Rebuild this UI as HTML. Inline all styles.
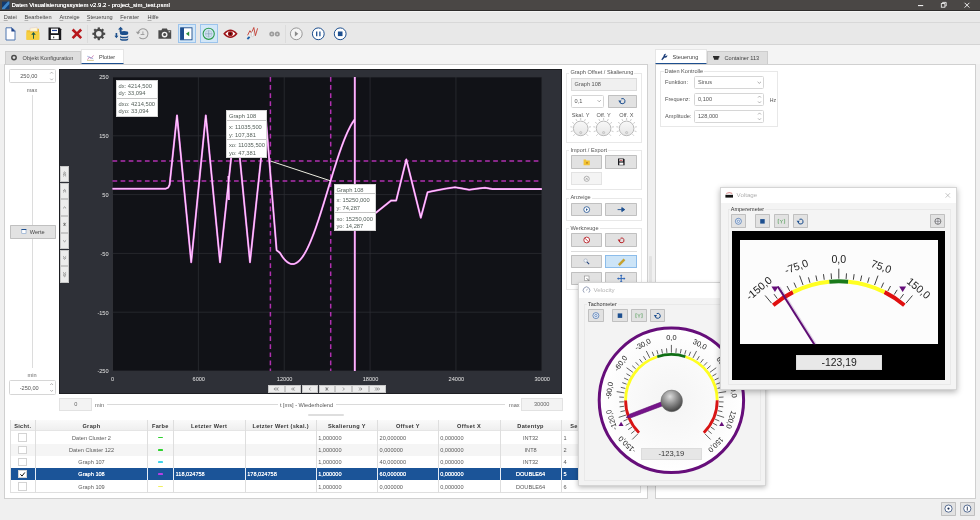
<!DOCTYPE html><html><head><meta charset="utf-8"><title>Daten Visualisierungssystem</title><style>
html,body{margin:0;padding:0}
body{width:980px;height:520px;overflow:hidden;background:#f0f0f0;font-family:"Liberation Sans",sans-serif;font-size:5.6px;color:#3a3a3a;position:relative}
.a{position:absolute;box-sizing:border-box}
.t{height:8px;line-height:8px;white-space:nowrap}
.c{text-align:center}.r{text-align:right}
.btn{background:#e2e2e2;border:1px solid #c0c0c0;border-radius:.8px}
.fld{background:#fff;border:1px solid #d6d6d6;border-radius:1.5px}
.grp{border:1px solid #e8e8e8}
.pnl{background:#fff;border:1px solid #d0d0d0}
.tip{background:#fff;border:1px solid #d4d4d4;color:#55605a;font-size:5.75px}
.b{font-weight:bold;letter-spacing:.33px}
#root{position:absolute;left:0;top:0;width:980px;height:520px;overflow:hidden;will-change:transform}
svg{position:absolute;left:0;top:0;overflow:visible}
</style></head><body><div id="root">
<div class="a " style="left:0.00px;top:0.00px;width:980.00px;height:11.00px;background:#4a4745;border-bottom:1px solid #2e2c2b"></div>
<svg width="980" height="12" viewBox="0 0 980 12"><rect x="2" y="1.6" width="7.4" height="7.6" fill="#123a6e"/><path d="M2 8 L8 1.6 H9.4 V4 L4.6 9.2 H2Z" fill="#3f86c8"/><path d="M918 5.6h5.2" stroke="#fff" stroke-width="1"/><rect x="941.3" y="3.6" width="3.6" height="3.6" fill="none" stroke="#fff" stroke-width=".8"/><path d="M942.6 3.4v-1h3.6v3.6h-1" fill="none" stroke="#fff" stroke-width=".8"/><path d="M964.6 2.8l4.8 4.8M969.4 2.8l-4.8 4.8" stroke="#fff" stroke-width=".9"/></svg>
<div class="a t " style="left:11.50px;top:1.30px;color:#fff;font-size:6px;text-shadow:0 0 .3px #fff">Daten Visualisierungssystem v2.9.2 - project_sim_test.psml</div>
<div class="a " style="left:0.00px;top:11.00px;width:980.00px;height:12.00px;background:#e9e9e9;border-top:1px solid #f4f4f4;border-bottom:1px solid #d8d8d8"></div>
<div class="a t " style="left:3.70px;top:13.30px;color:#444"><u style="text-decoration-thickness:.35px;text-underline-offset:.6px;text-decoration-color:#b0b0b0">D</u>atei</div>
<div class="a t " style="left:24.50px;top:13.30px;color:#444"><u style="text-decoration-thickness:.35px;text-underline-offset:.6px;text-decoration-color:#b0b0b0">B</u>earbeiten</div>
<div class="a t " style="left:59.50px;top:13.30px;color:#444"><u style="text-decoration-thickness:.35px;text-underline-offset:.6px;text-decoration-color:#b0b0b0">A</u>nzeige</div>
<div class="a t " style="left:86.80px;top:13.30px;color:#444"><u style="text-decoration-thickness:.35px;text-underline-offset:.6px;text-decoration-color:#b0b0b0">S</u>teuerung</div>
<div class="a t " style="left:120.20px;top:13.30px;color:#444"><u style="text-decoration-thickness:.35px;text-underline-offset:.6px;text-decoration-color:#b0b0b0">F</u>enster</div>
<div class="a t " style="left:147.50px;top:13.30px;color:#444"><u style="text-decoration-thickness:.35px;text-underline-offset:.6px;text-decoration-color:#b0b0b0">H</u>ilfe</div>
<div class="a " style="left:0.00px;top:23.00px;width:980.00px;height:22.00px;background:#e8e8e8;border-bottom:1px solid #d4d4d4"></div>
<div class="a " style="left:0.00px;top:45.00px;width:980.00px;height:19.00px;background:#f4f4f4"></div>
<div class="a " style="left:87.00px;top:25.00px;width:1.00px;height:18.00px;background:#dcdcdc"></div>
<div class="a " style="left:285.00px;top:25.00px;width:1.00px;height:18.00px;background:#dcdcdc"></div>
<div class="a " style="left:177.60px;top:24.20px;width:18.00px;height:18.40px;background:#d3e7f8;border:1px solid #9cc4ec"></div>
<div class="a " style="left:199.70px;top:24.20px;width:17.90px;height:18.40px;background:#d3e7f8;border:1px solid #9cc4ec"></div>
<svg width="980" height="50" viewBox="0 0 980 50"><path d="M6 27.799999999999997h6l3 3v9.2h-9z" fill="#fdfdff" stroke="#4f76b0" stroke-width="1"/><path d="M11.4 27.4v4h4z" fill="#1f438a"/><path d="M26.5 30.299999999999997h5l1 -1.6h6.5v11h-12.5z" fill="#f1c232"/><path d="M30 28.199999999999996l7 -1 .6 4h-7.6z" fill="#fff6d8" stroke="#caa" stroke-width=".3"/><path d="M26.5 32.3h13v7.4h-13z" fill="#f6cf3f"/><path d="M33 38.8v-4h-1.8l2.3-2.8 2.3 2.8h-1.8v4z" fill="#1f5c4a"/><path d="M48.5 27.599999999999998h11l1.7 1.7v10.7h-12.7z" fill="#1a1a1e"/><rect x="51" y="28.599999999999998" width="7" height="4.6" fill="#fff"/><rect x="52" y="29.9" width="5" height="1.2" fill="#27489a"/><rect x="50.8" y="35.0" width="8" height="4.4" fill="#fff"/><rect x="53.2" y="36.599999999999994" width="1" height="1.6" fill="#222"/><path d="M72.6 29.499999999999996l8.6 8.6M81.2 29.499999999999996l-8.6 8.6" stroke="#b8181c" stroke-width="2.6"/><path d="M103.00 33.80L105.20 33.80" stroke="#484848" stroke-width="2.2"/><path d="M101.77 36.77L103.33 38.33" stroke="#484848" stroke-width="2.2"/><path d="M98.80 38.00L98.80 40.20" stroke="#484848" stroke-width="2.2"/><path d="M95.83 36.77L94.27 38.33" stroke="#484848" stroke-width="2.2"/><path d="M94.60 33.80L92.40 33.80" stroke="#484848" stroke-width="2.2"/><path d="M95.83 30.83L94.27 29.27" stroke="#484848" stroke-width="2.2"/><path d="M98.80 29.60L98.80 27.40" stroke="#484848" stroke-width="2.2"/><path d="M101.77 30.83L103.33 29.27" stroke="#484848" stroke-width="2.2"/><circle cx="98.8" cy="33.8" r="3.9" fill="none" stroke="#484848" stroke-width="2.2"/><path d="M120 32.4a4.1 1.5 0 0 1 8.2 0v1.2a4.1 1.5 0 0 1-8.2 0z M120 35.199999999999996a4.1 1.5 0 0 0 8.2 0v1.5a4.1 1.5 0 0 1-8.2 0z M120 37.8a4.1 1.5 0 0 0 8.2 0v1.5a4.1 1.5 0 0 1-8.2 0z" fill="#1c4f8c"/><path d="M119.6 32.199999999999996v-2.6h-1.6l2.6-2.8 2.6 2.8h-1.6v2.6z" fill="#1c4f8c"/><path d="M115.6 33.0h1.6v2.8h1.2l-2 2.4-2-2.4h1.2z" fill="#1c4f8c"/><path d="M138 33.3a5 5 0 1 1 1.4 4" fill="none" stroke="#9a9a9a" stroke-width="1.1"/><path d="M135.8 31.799999999999997h4.4l-2.2 2.8z" fill="#9a9a9a"/><path d="M140.6 34.5h3.8M142.9 31.4v3" stroke="#9a9a9a" stroke-width=".9" fill="none"/><path d="M158.4 30.199999999999996h3l.9-1.6h4.6l.9 1.6h3.4v8.6h-12.8z" fill="#4a4a4a"/><circle cx="164.6" cy="34.599999999999994" r="2.9" fill="#f2f2f2"/><circle cx="164.6" cy="34.599999999999994" r="1.5" fill="#4a4a4a"/><rect x="168.6" y="31.299999999999997" width="1.6" height="1" fill="#eee"/><rect x="180.6" y="27.799999999999997" width="11.4" height="12" fill="#fff" stroke="#1d4f8f" stroke-width=".9"/><rect x="180.6" y="27.799999999999997" width="3.4" height="12" fill="#1d4f8f"/><path d="M189.2 31.4v4.8l-3.3-2.4z" fill="#2d8f3c"/><circle cx="208.7" cy="33.8" r="5.6" fill="none" stroke="#2d9a4a" stroke-width="1.1"/><circle cx="208.7" cy="33.8" r="3.4" fill="#cfe0ee" stroke="#9ab" stroke-width=".4"/><path d="M208.7 30.4v6.8M205.3 33.8h6.8" stroke="#7d99b4" stroke-width=".6"/><path d="M224.2 33.8q6.2 -7 12.4 0q-6.2 7 -12.4 0z" fill="#fff" stroke="#9c1418" stroke-width="1.5"/><circle cx="230.4" cy="33.8" r="2.5" fill="#9c1418"/><circle cx="230.4" cy="33.8" r="1" fill="#2a0a0a"/><path d="M247.6 35.3l2.3-4.6 1.6 2.3 2.3-5.5 1.6 8.2 2.2-7.4" fill="none" stroke="#c23a30" stroke-width=".9"/><path d="M251.6 31.999999999999996q1.6-1.4 2.2.6v3.4q-1.4 1.4-2.6 0z" fill="#f6f6f6" stroke="#aaa" stroke-width=".4"/><path d="M247.4 39.0l2.2-2.2" stroke="#1b5fa8" stroke-width="1.8"/><circle cx="271.8" cy="34.099999999999994" r="2.5" fill="#9c9c9c"/><circle cx="277.3" cy="34.099999999999994" r="2.5" fill="#9c9c9c"/><circle cx="271.8" cy="34.099999999999994" r=".9" fill="#d8d8d8"/><circle cx="277.3" cy="34.099999999999994" r=".9" fill="#d8d8d8"/><circle cx="296.3" cy="33.8" r="5.9" fill="#f4f4f4" stroke="#8f8f8f" stroke-width=".9"/><path d="M294.9 31.199999999999996v5.2l3.4-2.6z" fill="#8a8a8a"/><circle cx="318.3" cy="33.8" r="5.9" fill="#fff" stroke="#1d4f8f" stroke-width="1"/><path d="M316.7 31.4v4.8M319.9 31.4v4.8" stroke="#1d4f8f" stroke-width="1.3"/><circle cx="340.2" cy="33.8" r="5.9" fill="#fff" stroke="#1d4f8f" stroke-width="1"/><rect x="337.9" y="31.499999999999996" width="4.6" height="4.6" fill="#1d4f8f"/></svg>
<div class="a " style="left:4.50px;top:50.60px;width:76.70px;height:13.40px;background:#dedede;border:1px solid #cdcdcd;border-bottom:none"></div>
<div class="a t " style="left:22.60px;top:53.80px;color:#444">Objekt Konfiguration</div>
<div class="a " style="left:81.20px;top:49.30px;width:43.20px;height:14.70px;background:#fff;border:1px solid #e5e5e5;border-bottom:1.1px solid #1d4f8f"></div>
<div class="a t " style="left:99.00px;top:53.00px;color:#444">Plotter</div>
<div class="a pnl" style="left:4.00px;top:63.50px;width:643.60px;height:435.00px;"></div>
<div class="a pnl" style="left:655.00px;top:63.50px;width:320.60px;height:435.00px;"></div>
<div class="a " style="left:707.00px;top:50.60px;width:60.50px;height:13.40px;background:#dedede;border:1px solid #cdcdcd;border-bottom:none"></div>
<div class="a " style="left:655.00px;top:49.30px;width:52.00px;height:15.00px;background:#fff;border:1px solid #e5e5e5;border-bottom:1.1px solid #1d4f8f"></div>
<div class="a t " style="left:672.50px;top:53.00px;color:#444">Steuerung</div>
<div class="a t " style="left:724.50px;top:53.80px;color:#444">Container 113</div>
<svg width="980" height="70" viewBox="0 0 980 70"><circle cx="14" cy="57.6" r="2.2" fill="none" stroke="#4a4a4a" stroke-width="1.5"/><path d="M87.5 59.6l2-2.6 1.6 1.4 2.4-3" fill="none" stroke="#c05a9a" stroke-width=".7"/><path d="M87.2 56.2l6 2.6" stroke="#6a8fd0" stroke-width=".6"/><path d="M87 60.4h6.8" stroke="#b9a34a" stroke-width=".6"/><path transform="translate(2.6 .3) scale(1.0)" d="M661 55.6a1.9 1.9 0 0 1 2.6 -1.9l-1.2 1.3 .9 .9 1.3 -1.2a1.9 1.9 0 0 1 -2.4 2.5l-2.6 2.8 -.9 -.9z" fill="#1d3f7a"/><path d="M713 56h6.4v1.4h-6.4zM713.6 57.6h5.2l-.5 2.2h-4.2z" fill="#2a2a2a"/></svg>
<div class="a grp" style="left:660.00px;top:71.00px;width:118.00px;height:56.00px;"></div>
<div class="a t " style="left:663.60px;top:66.80px;background:#fff;padding:0 1px;color:#555">Daten Kontrolle</div>
<div class="a t " style="left:665.00px;top:78.40px;color:#555">Funktion:</div>
<div class="a fld" style="left:694.20px;top:76.00px;width:69.60px;height:12.80px;"></div>
<div class="a t " style="left:698.00px;top:78.40px;color:#555">Sinus</div>
<div class="a t " style="left:665.00px;top:95.30px;color:#555">Frequenz:</div>
<div class="a fld" style="left:694.20px;top:92.90px;width:69.60px;height:12.80px;"></div>
<div class="a t " style="left:698.00px;top:95.30px;color:#555">0,100</div>
<div class="a t " style="left:665.00px;top:112.20px;color:#555">Amplitude:</div>
<div class="a fld" style="left:694.20px;top:109.80px;width:69.60px;height:12.80px;"></div>
<div class="a t " style="left:698.00px;top:112.20px;color:#555">128,000</div>
<div class="a t " style="left:769.80px;top:95.60px;color:#555;font-size:5.2px">Hz</div>
<svg width="980" height="130" viewBox="0 0 980 130"><path d="M757.6 81.8l1.7 1.6 1.7-1.6" fill="none" stroke="#777" stroke-width=".6"/><path d="M758 97.6l1.5-1.6 1.5 1.6M758 101.4l1.5 1.6 1.5-1.6M758 114.5l1.5-1.6 1.5 1.6M758 118.3l1.5 1.6 1.5-1.6" fill="none" stroke="#888" stroke-width=".6"/></svg>
<div class="a btn" style="left:940.80px;top:501.60px;width:15.60px;height:14.00px;"></div>
<div class="a btn" style="left:959.60px;top:501.60px;width:15.70px;height:14.00px;"></div>
<svg width="980" height="520" viewBox="0 0 980 520"><circle cx="948.5" cy="508.6" r="3.6" fill="#fff" stroke="#2f4a78" stroke-width=".8"/><circle cx="948.5" cy="508.6" r="1.1" fill="#1c2f55"/><circle cx="967.3" cy="508.6" r="3.6" fill="#fff" stroke="#2f4a78" stroke-width=".8"/><path d="M967.3 506.6v4" stroke="#1c2f55" stroke-width=".9"/></svg>
<div class="a fld" style="left:9.00px;top:69.00px;width:47.00px;height:14.00px;"></div>
<div class="a t c " style="left:-21.20px;width:100px;top:72.20px;color:#555">250,00</div>
<div class="a fld" style="left:9.00px;top:380.00px;width:47.00px;height:15.00px;"></div>
<div class="a t c " style="left:-20.80px;width:100px;top:383.60px;color:#555">-250,00</div>
<div class="a t c " style="left:-18.00px;width:100px;top:85.60px;color:#666">max</div>
<div class="a t c " style="left:-18.00px;width:100px;top:370.60px;color:#666">min</div>
<div class="a " style="left:32.00px;top:95.00px;width:1.00px;height:130.00px;background:#dcdcdc"></div>
<div class="a " style="left:32.00px;top:239.00px;width:1.00px;height:129.00px;background:#dcdcdc"></div>
<div class="a btn" style="left:10.00px;top:225.00px;width:45.60px;height:13.70px;"></div>
<div class="a t " style="left:29.80px;top:228.00px;color:#444">Werte</div>
<svg width="980" height="520" viewBox="0 0 980 520"><path d="M50.2 73.6l1.4-1.5 1.4 1.5M50.2 78.6l1.4 1.5 1.4-1.5M50.2 385l1.4-1.5 1.4 1.5M50.2 390l1.4 1.5 1.4-1.5" fill="none" stroke="#888" stroke-width=".6"/><rect x="21.8" y="229.4" width="4.2" height="4.2" fill="#fff" stroke="#7a9cc8" stroke-width=".6"/><path d="M21.5 229.5h4.8" stroke="#1d4f8f" stroke-width="1"/></svg>
<div class="a " style="left:59.20px;top:397.50px;width:33.00px;height:13.70px;background:#f3f3f3;border:1px solid #e2e2e2"></div>
<div class="a t c " style="left:25.70px;width:100px;top:400.40px;color:#666">0</div>
<div class="a t " style="left:95.00px;top:400.60px;color:#666">min</div>
<div class="a " style="left:107.00px;top:404.30px;width:171.00px;height:0.60px;background:#dadada"></div>
<div class="a t c " style="left:256.50px;width:100px;top:400.50px;color:#555">t [ms] - Wiederholend</div>
<div class="a " style="left:336.00px;top:404.30px;width:169.00px;height:0.60px;background:#dadada"></div>
<div class="a t " style="left:509.00px;top:400.60px;color:#666">max</div>
<div class="a " style="left:521.00px;top:397.50px;width:41.50px;height:13.70px;background:#f3f3f3;border:1px solid #e2e2e2"></div>
<div class="a t c " style="left:491.70px;width:100px;top:400.40px;color:#666">30000</div>
<div class="a " style="left:308.00px;top:414.00px;width:36.00px;height:2.00px;background:#dedede;border-radius:1px"></div>
<div class="a " style="left:59.40px;top:69.10px;width:502.90px;height:324.90px;background:#2e3037;border:1px solid #1d1e22"></div>
<div class="a " style="left:112.50px;top:77.00px;width:429.30px;height:294.00px;background:#111217"></div>
<svg width="980" height="520" viewBox="0 0 980 520"><path d="M112.50 77.0V371.0" stroke="#2f3137" stroke-width=".7"/><path d="M198.36 77.0V371.0" stroke="#2f3137" stroke-width=".7"/><path d="M284.22 77.0V371.0" stroke="#2f3137" stroke-width=".7"/><path d="M370.08 77.0V371.0" stroke="#2f3137" stroke-width=".7"/><path d="M455.94 77.0V371.0" stroke="#2f3137" stroke-width=".7"/><path d="M541.80 77.0V371.0" stroke="#2f3137" stroke-width=".7"/><path d="M112.5 371.00H541.8" stroke="#2f3137" stroke-width=".7"/><path d="M112.5 312.20H541.8" stroke="#2f3137" stroke-width=".7"/><path d="M112.5 253.40H541.8" stroke="#2f3137" stroke-width=".7"/><path d="M112.5 194.60H541.8" stroke="#2f3137" stroke-width=".7"/><path d="M112.5 135.80H541.8" stroke="#2f3137" stroke-width=".7"/><path d="M112.5 77.00H541.8" stroke="#2f3137" stroke-width=".7"/><path d="M112.5 161H541.8M112.5 180.9H541.8" stroke="#b030b0" stroke-width="1.5" stroke-dasharray="4.7 3.4" fill="none"/><path d="M270.4 77.0V371.0M330.7 77.0V371.0" stroke="#b030b0" stroke-width="1.5" stroke-dasharray="4.7 3.4" fill="none"/><path d="M112.50 188.70 L165.80 188.70 L168.20 187.60 L169.60 184.80 L177.00 115.40 L191.20 262.20 L205.80 115.40 L220.00 262.20 L235.70 115.40 L250.00 262.20 L265.60 115.40 L276.60 250.20 L279.20 252.20 L280.50 253.73 L281.50 255.34 L282.50 256.82 L283.50 258.16 L284.50 259.38 L285.50 260.45 L286.50 261.39 L287.50 262.18 L288.50 262.84 L289.50 263.34 L290.50 263.71 L291.50 263.93 L292.50 264.00 L293.50 263.93 L294.50 263.71 L295.50 263.34 L296.50 262.84 L297.50 262.18 L298.50 261.39 L299.50 260.45 L300.50 259.38 L301.50 258.16 L302.50 256.82 L303.50 255.34 L304.50 253.73 L305.50 252.00 L306.50 250.14 L307.50 248.17 L308.50 246.07 L309.50 243.87 L310.50 241.56 L311.50 239.15 L312.50 236.64 L313.50 234.04 L314.50 231.35 L315.50 228.58 L316.50 225.73 L317.50 222.80 L318.50 219.82 L319.50 216.77 L320.50 213.66 L321.50 210.51 L322.50 207.32 L323.50 204.09 L324.50 200.83 L325.50 197.55 L326.50 194.25 L327.50 190.94 L328.50 187.62 L329.50 184.31 L330.50 181.00 L331.50 177.72 L332.50 174.45 L333.50 171.21 L334.50 168.00 L335.50 164.83 L336.50 161.71 L337.50 158.64 L338.50 155.63 L339.50 152.69 L340.50 149.81 L341.50 147.01 L342.50 144.29 L343.50 141.66 L344.50 139.12 L345.50 136.67 L346.50 134.32 L347.50 132.08 L348.50 129.95 L349.50 127.94 L350.50 126.04 L351.50 124.26 L352.50 122.61 L353.50 121.08 L354.50 119.69 L354.80 119.30 M228.4 176 L228.9 200 M355.60 229.00 L375.60 213.00 L391.00 200.60 L396.20 200.60 L406.30 159.40 L420.80 217.70 L427.60 192.20 L432.00 191.20 L445.00 188.80 L455.00 187.30 L462.00 188.40 L469.20 189.80 L478.00 188.60 L485.00 187.70 L492.40 189.10 L541.80 189.10 M354.8 77.0 V371.0" fill="none" stroke="#e06ae0" stroke-width="2" stroke-linejoin="round"/><path d="M112.50 188.70 L165.80 188.70 L168.20 187.60 L169.60 184.80 L177.00 115.40 L191.20 262.20 L205.80 115.40 L220.00 262.20 L235.70 115.40 L250.00 262.20 L265.60 115.40 L276.60 250.20 L279.20 252.20 L280.50 253.73 L281.50 255.34 L282.50 256.82 L283.50 258.16 L284.50 259.38 L285.50 260.45 L286.50 261.39 L287.50 262.18 L288.50 262.84 L289.50 263.34 L290.50 263.71 L291.50 263.93 L292.50 264.00 L293.50 263.93 L294.50 263.71 L295.50 263.34 L296.50 262.84 L297.50 262.18 L298.50 261.39 L299.50 260.45 L300.50 259.38 L301.50 258.16 L302.50 256.82 L303.50 255.34 L304.50 253.73 L305.50 252.00 L306.50 250.14 L307.50 248.17 L308.50 246.07 L309.50 243.87 L310.50 241.56 L311.50 239.15 L312.50 236.64 L313.50 234.04 L314.50 231.35 L315.50 228.58 L316.50 225.73 L317.50 222.80 L318.50 219.82 L319.50 216.77 L320.50 213.66 L321.50 210.51 L322.50 207.32 L323.50 204.09 L324.50 200.83 L325.50 197.55 L326.50 194.25 L327.50 190.94 L328.50 187.62 L329.50 184.31 L330.50 181.00 L331.50 177.72 L332.50 174.45 L333.50 171.21 L334.50 168.00 L335.50 164.83 L336.50 161.71 L337.50 158.64 L338.50 155.63 L339.50 152.69 L340.50 149.81 L341.50 147.01 L342.50 144.29 L343.50 141.66 L344.50 139.12 L345.50 136.67 L346.50 134.32 L347.50 132.08 L348.50 129.95 L349.50 127.94 L350.50 126.04 L351.50 124.26 L352.50 122.61 L353.50 121.08 L354.50 119.69 L354.80 119.30 M228.4 176 L228.9 200 M355.60 229.00 L375.60 213.00 L391.00 200.60 L396.20 200.60 L406.30 159.40 L420.80 217.70 L427.60 192.20 L432.00 191.20 L445.00 188.80 L455.00 187.30 L462.00 188.40 L469.20 189.80 L478.00 188.60 L485.00 187.70 L492.40 189.10 L541.80 189.10 M354.8 77.0 V371.0" fill="none" stroke="#ffd0ff" stroke-width="1.1" stroke-linejoin="round"/><path d="M270.4 161L330.7 180.9" stroke="#ecece0" stroke-width="1"/></svg>
<div class="a t r " style="left:8.60px;width:100px;top:367.40px;color:#e4e4e4">-250</div>
<div class="a t r " style="left:8.60px;width:100px;top:308.60px;color:#e4e4e4">-150</div>
<div class="a t r " style="left:8.60px;width:100px;top:249.80px;color:#e4e4e4">-50</div>
<div class="a t r " style="left:8.60px;width:100px;top:191.00px;color:#e4e4e4">50</div>
<div class="a t r " style="left:8.60px;width:100px;top:132.20px;color:#e4e4e4">150</div>
<div class="a t r " style="left:8.60px;width:100px;top:73.40px;color:#e4e4e4">250</div>
<div class="a t c " style="left:62.50px;width:100px;top:374.80px;color:#e4e4e4">0</div>
<div class="a t c " style="left:148.76px;width:100px;top:374.80px;color:#e4e4e4">6000</div>
<div class="a t c " style="left:234.62px;width:100px;top:374.80px;color:#e4e4e4">12000</div>
<div class="a t c " style="left:320.48px;width:100px;top:374.80px;color:#e4e4e4">18000</div>
<div class="a t c " style="left:406.34px;width:100px;top:374.80px;color:#e4e4e4">24000</div>
<div class="a t c " style="left:492.20px;width:100px;top:374.80px;color:#e4e4e4">30000</div>
<div class="a tip" style="left:116.00px;top:80.00px;width:41.80px;height:36.60px;"><div class="a t" style="left:1.60px;top:0.80px">dx: 4214,500</div><div class="a t" style="left:1.60px;top:8.20px">dy: 33,094</div><div class="a t" style="left:1.60px;top:18.80px">dxo: 4214,500</div><div class="a t" style="left:1.60px;top:26.00px">dyo: 33,094</div><div class="a" style="left:0;right:0;top:16.90px;height:1px;background:#c4c4c4"></div></div>
<div class="a tip" style="left:226.20px;top:110.00px;width:41.00px;height:47.80px;"><div class="a t" style="left:1.80px;top:1.20px">Graph 108</div><div class="a t" style="left:1.80px;top:12.00px">x: 11035,500</div><div class="a t" style="left:1.80px;top:19.60px">y: 107,381</div><div class="a t" style="left:1.80px;top:30.20px">xo: 11035,500</div><div class="a t" style="left:1.80px;top:37.60px">yo: 47,381</div><div class="a" style="left:0;right:0;top:8.80px;height:1px;background:#c4c4c4"></div><div class="a" style="left:0;right:0;top:27.70px;height:1px;background:#c4c4c4"></div></div>
<div class="a tip" style="left:333.60px;top:183.60px;width:42.20px;height:47.00px;"><div class="a t" style="left:1.80px;top:1.00px">Graph 108</div><div class="a t" style="left:1.80px;top:11.80px">x: 15250,000</div><div class="a t" style="left:1.80px;top:19.40px">y: 74,287</div><div class="a t" style="left:1.80px;top:30.20px">xo: 15250,000</div><div class="a t" style="left:1.80px;top:37.80px">yo: 14,287</div><div class="a" style="left:0;right:0;top:8.70px;height:1px;background:#c4c4c4"></div><div class="a" style="left:0;right:0;top:27.70px;height:1px;background:#c4c4c4"></div></div>
<div class="a " style="left:60.00px;top:166.00px;width:9.20px;height:16.40px;background:#ececec;border:1px solid #c8c8c8"></div>
<div class="a " style="left:60.00px;top:182.72px;width:9.20px;height:16.40px;background:#ececec;border:1px solid #c8c8c8"></div>
<div class="a " style="left:60.00px;top:199.44px;width:9.20px;height:16.40px;background:#ececec;border:1px solid #c8c8c8"></div>
<div class="a " style="left:60.00px;top:216.16px;width:9.20px;height:16.40px;background:#ececec;border:1px solid #c8c8c8"></div>
<div class="a " style="left:60.00px;top:232.88px;width:9.20px;height:16.40px;background:#ececec;border:1px solid #c8c8c8"></div>
<div class="a " style="left:60.00px;top:249.60px;width:9.20px;height:16.40px;background:#ececec;border:1px solid #c8c8c8"></div>
<div class="a " style="left:60.00px;top:266.32px;width:9.20px;height:16.40px;background:#ececec;border:1px solid #c8c8c8"></div>
<div class="a " style="left:268.00px;top:384.60px;width:16.50px;height:8.80px;background:#ececec;border:1px solid #c8c8c8"></div>
<div class="a " style="left:284.85px;top:384.60px;width:16.50px;height:8.80px;background:#ececec;border:1px solid #c8c8c8"></div>
<div class="a " style="left:301.70px;top:384.60px;width:16.50px;height:8.80px;background:#ececec;border:1px solid #c8c8c8"></div>
<div class="a " style="left:318.55px;top:384.60px;width:16.50px;height:8.80px;background:#ececec;border:1px solid #c8c8c8"></div>
<div class="a " style="left:335.40px;top:384.60px;width:16.50px;height:8.80px;background:#ececec;border:1px solid #c8c8c8"></div>
<div class="a " style="left:352.25px;top:384.60px;width:16.50px;height:8.80px;background:#ececec;border:1px solid #c8c8c8"></div>
<div class="a " style="left:369.10px;top:384.60px;width:16.50px;height:8.80px;background:#ececec;border:1px solid #c8c8c8"></div>
<svg width="980" height="520" viewBox="0 0 980 520"><path d="M63.10 173.40L64.60 172.00L66.10 173.40M63.10 174.90L64.60 173.50L66.10 174.90M63.10 176.40L64.60 175.00L66.10 176.40M63.10 190.87L64.60 189.47L66.10 190.87M63.10 192.37L64.60 190.97L66.10 192.37M63.10 208.34L64.60 206.94L66.10 208.34M63.00 222.96L66.20 225.76M66.20 222.96L63.00 225.76M64.60 222.66V226.06M63.10 240.38L64.60 241.78L66.10 240.38M63.10 256.35L64.60 257.75L66.10 256.35M63.10 257.85L64.60 259.25L66.10 257.85M63.10 272.32L64.60 273.72L66.10 272.32M63.10 273.82L64.60 275.22L66.10 273.82M63.10 275.32L64.60 276.72L66.10 275.32M275.35 387.50L273.95 389.00L275.35 390.50M276.95 387.50L275.55 389.00L276.95 390.50M278.55 387.50L277.15 389.00L278.55 390.50M293.00 387.50L291.60 389.00L293.00 390.50M294.60 387.50L293.20 389.00L294.60 390.50M310.65 387.50L309.25 389.00L310.65 390.50M325.20 387.60L328.40 390.40M328.40 387.60L325.20 390.40M326.80 387.30V390.70M342.95 387.50L344.35 389.00L342.95 390.50M359.00 387.50L360.40 389.00L359.00 390.50M360.60 387.50L362.00 389.00L360.60 390.50M375.05 387.50L376.45 389.00L375.05 390.50M376.65 387.50L378.05 389.00L376.65 390.50M378.25 387.50L379.65 389.00L378.25 390.50" fill="none" stroke="#555" stroke-width=".55"/></svg>
<div class="a grp" style="left:565.60px;top:72.60px;width:76.20px;height:70.40px;"></div>
<div class="a t " style="left:569.40px;top:68.40px;background:#fff;padding:0 1px;color:#555">Graph Offset / Skalierung</div>
<div class="a " style="left:570.50px;top:77.60px;width:66.30px;height:13.20px;background:#f0f0f0;border:1px solid #dcdcdc"></div>
<div class="a t " style="left:574.50px;top:80.40px;color:#555">Graph 108</div>
<div class="a fld" style="left:570.50px;top:94.50px;width:33.50px;height:13.10px;"></div>
<div class="a t " style="left:574.50px;top:97.20px;color:#555">0,1</div>
<div class="a btn" style="left:607.50px;top:94.50px;width:29.30px;height:13.10px;"></div>
<div class="a t c " style="left:530.60px;width:100px;top:110.60px;color:#555">Skal. Y</div>
<div class="a t c " style="left:553.60px;width:100px;top:110.60px;color:#555">Off. Y</div>
<div class="a t c " style="left:576.40px;width:100px;top:110.60px;color:#555">Off. X</div>
<svg width="980" height="520" viewBox="0 0 980 520"><defs><linearGradient id="kb" x1="0" y1="0" x2="0" y2="1"><stop offset="0" stop-color="#f8f8f8"/><stop offset="1" stop-color="#e6e6e6"/></linearGradient></defs><path d="M597.6 100.2l1.6 1.6 1.6-1.6" fill="none" stroke="#777" stroke-width=".6"/><path d="M619.80 101.30a2.6 2.6 0 1 0 1.43 -2.47" fill="none" stroke="#1d4f8f" stroke-width="1"/><path d="M618.30 100.40h3.2l-1.6 2.3z" fill="#1d4f8f"/><path d="M574.83 134.27L573.35 135.75" stroke="#b4b4b4" stroke-width=".7"/><path d="M572.81 130.96L570.81 131.61" stroke="#b4b4b4" stroke-width=".7"/><path d="M572.50 127.10L570.43 126.77" stroke="#b4b4b4" stroke-width=".7"/><path d="M573.99 123.52L572.29 122.29" stroke="#b4b4b4" stroke-width=".7"/><path d="M576.93 121.00L575.98 119.13" stroke="#b4b4b4" stroke-width=".7"/><path d="M580.70 120.10L580.70 118.00" stroke="#b4b4b4" stroke-width=".7"/><path d="M584.47 121.00L585.42 119.13" stroke="#b4b4b4" stroke-width=".7"/><path d="M587.41 123.52L589.11 122.29" stroke="#b4b4b4" stroke-width=".7"/><path d="M588.90 127.10L590.97 126.77" stroke="#b4b4b4" stroke-width=".7"/><path d="M588.59 130.96L590.59 131.61" stroke="#b4b4b4" stroke-width=".7"/><path d="M586.57 134.27L588.05 135.75" stroke="#b4b4b4" stroke-width=".7"/><circle cx="580.7" cy="128.4" r="7.3" fill="url(#kb)" stroke="#b2b2b2" stroke-width=".9"/><circle cx="580.7" cy="132.6" r="1.1" fill="#dcdcdc" stroke="#a8a8a8" stroke-width=".5"/><path d="M597.73 134.27L596.25 135.75" stroke="#b4b4b4" stroke-width=".7"/><path d="M595.71 130.96L593.71 131.61" stroke="#b4b4b4" stroke-width=".7"/><path d="M595.40 127.10L593.33 126.77" stroke="#b4b4b4" stroke-width=".7"/><path d="M596.89 123.52L595.19 122.29" stroke="#b4b4b4" stroke-width=".7"/><path d="M599.83 121.00L598.88 119.13" stroke="#b4b4b4" stroke-width=".7"/><path d="M603.60 120.10L603.60 118.00" stroke="#b4b4b4" stroke-width=".7"/><path d="M607.37 121.00L608.32 119.13" stroke="#b4b4b4" stroke-width=".7"/><path d="M610.31 123.52L612.01 122.29" stroke="#b4b4b4" stroke-width=".7"/><path d="M611.80 127.10L613.87 126.77" stroke="#b4b4b4" stroke-width=".7"/><path d="M611.49 130.96L613.49 131.61" stroke="#b4b4b4" stroke-width=".7"/><path d="M609.47 134.27L610.95 135.75" stroke="#b4b4b4" stroke-width=".7"/><circle cx="603.6" cy="128.4" r="7.3" fill="url(#kb)" stroke="#b2b2b2" stroke-width=".9"/><circle cx="603.6" cy="132.6" r="1.1" fill="#dcdcdc" stroke="#a8a8a8" stroke-width=".5"/><path d="M620.73 134.27L619.25 135.75" stroke="#b4b4b4" stroke-width=".7"/><path d="M618.71 130.96L616.71 131.61" stroke="#b4b4b4" stroke-width=".7"/><path d="M618.40 127.10L616.33 126.77" stroke="#b4b4b4" stroke-width=".7"/><path d="M619.89 123.52L618.19 122.29" stroke="#b4b4b4" stroke-width=".7"/><path d="M622.83 121.00L621.88 119.13" stroke="#b4b4b4" stroke-width=".7"/><path d="M626.60 120.10L626.60 118.00" stroke="#b4b4b4" stroke-width=".7"/><path d="M630.37 121.00L631.32 119.13" stroke="#b4b4b4" stroke-width=".7"/><path d="M633.31 123.52L635.01 122.29" stroke="#b4b4b4" stroke-width=".7"/><path d="M634.80 127.10L636.87 126.77" stroke="#b4b4b4" stroke-width=".7"/><path d="M634.49 130.96L636.49 131.61" stroke="#b4b4b4" stroke-width=".7"/><path d="M632.47 134.27L633.95 135.75" stroke="#b4b4b4" stroke-width=".7"/><circle cx="626.6" cy="128.4" r="7.3" fill="url(#kb)" stroke="#b2b2b2" stroke-width=".9"/><circle cx="626.6" cy="132.6" r="1.1" fill="#dcdcdc" stroke="#a8a8a8" stroke-width=".5"/></svg>
<div class="a grp" style="left:565.60px;top:150.00px;width:76.20px;height:40.00px;"></div>
<div class="a t " style="left:569.40px;top:145.80px;background:#fff;padding:0 1px;color:#555">Import / Export</div>
<div class="a btn" style="left:571.00px;top:155.40px;width:31.40px;height:13.20px;"></div>
<div class="a btn" style="left:605.40px;top:155.40px;width:31.60px;height:13.20px;"></div>
<div class="a " style="left:571.00px;top:172.30px;width:31.40px;height:13.00px;background:#f4f4f4;border:1px solid #e3e3e3"></div>
<div class="a grp" style="left:565.60px;top:197.60px;width:76.20px;height:23.20px;"></div>
<div class="a t " style="left:569.40px;top:193.40px;background:#fff;padding:0 1px;color:#555">Anzeige</div>
<div class="a btn" style="left:571.00px;top:203.00px;width:31.40px;height:13.20px;"></div>
<div class="a btn" style="left:605.40px;top:203.00px;width:31.60px;height:13.20px;"></div>
<div class="a grp" style="left:565.60px;top:228.40px;width:76.20px;height:61.60px;"></div>
<div class="a t " style="left:569.40px;top:224.20px;background:#fff;padding:0 1px;color:#555">Werkzeuge</div>
<div class="a btn" style="left:571.00px;top:233.20px;width:31.40px;height:13.60px;"></div>
<div class="a btn" style="left:605.40px;top:233.20px;width:31.60px;height:13.60px;"></div>
<div class="a " style="left:571.00px;top:250.60px;width:66.00px;height:0.60px;background:#dcdcdc"></div>
<div class="a btn" style="left:571.00px;top:254.80px;width:31.40px;height:13.60px;"></div>
<div class="a " style="left:605.40px;top:254.80px;width:31.60px;height:13.60px;background:#cce4f7;border:1px solid #8bbcea"></div>
<div class="a btn" style="left:571.00px;top:271.80px;width:31.40px;height:13.60px;"></div>
<div class="a btn" style="left:605.40px;top:271.80px;width:31.60px;height:13.60px;"></div>
<div class="a " style="left:649.00px;top:256.00px;width:3.00px;height:164.00px;background:#e2e2e2;border-radius:1px"></div>
<svg width="980" height="520" viewBox="0 0 980 520"><path d="M583.6 159.6h2.2l.6.8h3.4v4.8h-6.2z" fill="#f1c232"/><circle cx="587" cy="162.8" r=".9" fill="#b87a1a"/><path d="M618 158.6h5.6l1 1v5.6h-6.6z" fill="#1a1a1e"/><rect x="619.3" y="159.2" width="3.6" height="2.2" fill="#fff"/><rect x="619.8" y="159.9" width="2.6" height=".8" fill="#b8242a"/><rect x="619.3" y="162.6" width="4" height="2.2" fill="#fff"/><circle cx="586.7" cy="178.8" r="2.6" fill="none" stroke="#8a8a8a" stroke-width=".6"/><path d="M585.6 177.7l2.2 2.2M587.8 177.7l-2.2 2.2" stroke="#8a8a8a" stroke-width=".6"/><circle cx="586.7" cy="209.6" r="2.9" fill="#fff" stroke="#1d4f8f" stroke-width=".8"/><path d="M586 208.2v2.8l1.9-1.4z" fill="#1d4f8f"/><path d="M617.6 209.6h4.2v-2l3 2 -3 2v-2" fill="#1d4f8f" stroke="#1d4f8f" stroke-width=".9"/><circle cx="586.7" cy="240" r="2.9" fill="#fff" stroke="#b8242a" stroke-width=".9"/><path d="M584.8 238.1l3.8 3.8" stroke="#b8242a" stroke-width=".9"/><path d="M619.20 240.50a2.4 2.4 0 1 0 1.32 -2.28" fill="none" stroke="#b8242a" stroke-width="1"/><path d="M617.70 239.60h3.2l-1.6 2.3z" fill="#b8242a"/><circle cx="585.6" cy="260.6" r="1.7" fill="#eef3fa" stroke="#8a9ab0" stroke-width=".5"/><path d="M586.9 261.9l2.2 2.2" stroke="#1d3f7a" stroke-width="1.1"/><path d="M618.2 264.2l5.4-5.4 1.5 1.5-5.4 5.4z" fill="#c9a227" stroke="#a8861c" stroke-width=".3"/><rect x="584.4" y="276" width="4.6" height="4.6" fill="#fff" stroke="#777" stroke-width=".5"/><path d="M586.6 278.2l2.6 2.6" stroke="#444" stroke-width=".7"/><path d="M621.2 275.4v6.4M618 278.6h6.4" stroke="#2f67b8" stroke-width="1"/><path d="M621.2 274.4l1.4 1.6h-2.8zM621.2 282.8l1.4-1.6h-2.8zM617 278.6l1.6-1.4v2.8zM625.4 278.6l-1.6-1.4v2.8z" fill="#2f67b8"/></svg>
<div class="a " style="left:10.00px;top:419.50px;width:631.00px;height:73.50px;background:#fff;border:1px solid #dfdfdf"></div>
<div class="a " style="left:10.50px;top:420.00px;width:630.00px;height:11.30px;background:linear-gradient(#fafafa,#efefef);border-bottom:1px solid #e5e5e5"></div>
<div class="a " style="left:10.50px;top:443.55px;width:630.00px;height:12.25px;background:#f5f5f5"></div>
<div class="a " style="left:10.50px;top:468.20px;width:630.00px;height:12.10px;background:#1b5498"></div>
<div class="a t c b" style="left:-27.25px;width:100px;top:421.50px;color:#333">Sicht.</div>
<div class="a t c b" style="left:41.50px;width:100px;top:421.50px;color:#333">Graph</div>
<div class="a t c b" style="left:110.35px;width:100px;top:421.50px;color:#333">Farbe</div>
<div class="a t c b" style="left:159.20px;width:100px;top:421.50px;color:#333">Letzter Wert</div>
<div class="a t c b" style="left:230.70px;width:100px;top:421.50px;color:#333">Letzter Wert (skal.)</div>
<div class="a t c b" style="left:296.90px;width:100px;top:421.50px;color:#333">Skalierung Y</div>
<div class="a t c b" style="left:357.90px;width:100px;top:421.50px;color:#333">Offset Y</div>
<div class="a t c b" style="left:419.10px;width:100px;top:421.50px;color:#333">Offset X</div>
<div class="a t c b" style="left:480.60px;width:100px;top:421.50px;color:#333">Datentyp</div>
<div class="a t b" style="left:570.20px;top:421.50px;color:#333">Sensor</div>
<div class="a " style="left:35.20px;top:420.00px;width:0.60px;height:72.60px;background:#dedede"></div>
<div class="a " style="left:147.20px;top:420.00px;width:0.60px;height:72.60px;background:#dedede"></div>
<div class="a " style="left:172.90px;top:420.00px;width:0.60px;height:72.60px;background:#dedede"></div>
<div class="a " style="left:244.90px;top:420.00px;width:0.60px;height:72.60px;background:#dedede"></div>
<div class="a " style="left:315.90px;top:420.00px;width:0.60px;height:72.60px;background:#dedede"></div>
<div class="a " style="left:377.30px;top:420.00px;width:0.60px;height:72.60px;background:#dedede"></div>
<div class="a " style="left:437.90px;top:420.00px;width:0.60px;height:72.60px;background:#dedede"></div>
<div class="a " style="left:499.70px;top:420.00px;width:0.60px;height:72.60px;background:#dedede"></div>
<div class="a " style="left:560.90px;top:420.00px;width:0.60px;height:72.60px;background:#dedede"></div>
<div class="a " style="left:18.40px;top:433.43px;width:8.20px;height:8.20px;background:#fff;border:1px solid #d3d3d3"></div>
<div class="a t c " style="left:41.50px;width:100px;top:433.53px;color:#5a5a5a">Daten Cluster 2</div>
<div class="a " style="left:157.60px;top:436.63px;width:5.20px;height:1.70px;background:#2fd22f;border-radius:.4px"></div>
<div class="a t " style="left:318.20px;top:433.53px;color:#5a5a5a">1,000000</div>
<div class="a t " style="left:379.60px;top:433.53px;color:#5a5a5a">20,000000</div>
<div class="a t " style="left:440.20px;top:433.53px;color:#5a5a5a">0,000000</div>
<div class="a t c " style="left:480.60px;width:100px;top:433.53px;color:#5a5a5a">INT32</div>
<div class="a t " style="left:563.60px;top:433.53px;color:#5a5a5a">1</div>
<div class="a " style="left:18.40px;top:445.68px;width:8.20px;height:8.20px;background:#fff;border:1px solid #d3d3d3"></div>
<div class="a t c " style="left:41.50px;width:100px;top:445.78px;color:#5a5a5a">Daten Cluster 122</div>
<div class="a " style="left:157.60px;top:448.88px;width:5.20px;height:1.70px;background:#2fd22f;border-radius:.4px"></div>
<div class="a t " style="left:318.20px;top:445.78px;color:#5a5a5a">1,000000</div>
<div class="a t " style="left:379.60px;top:445.78px;color:#5a5a5a">0,000000</div>
<div class="a t " style="left:440.20px;top:445.78px;color:#5a5a5a">0,000000</div>
<div class="a t c " style="left:480.60px;width:100px;top:445.78px;color:#5a5a5a">INT8</div>
<div class="a t " style="left:563.60px;top:445.78px;color:#5a5a5a">2</div>
<div class="a " style="left:18.40px;top:457.93px;width:8.20px;height:8.20px;background:#fff;border:1px solid #d3d3d3"></div>
<div class="a t c " style="left:41.50px;width:100px;top:458.03px;color:#5a5a5a">Graph 107</div>
<div class="a " style="left:157.60px;top:461.13px;width:5.20px;height:1.70px;background:#3fd3ea;border-radius:.4px"></div>
<div class="a t " style="left:318.20px;top:458.03px;color:#5a5a5a">1,000000</div>
<div class="a t " style="left:379.60px;top:458.03px;color:#5a5a5a">40,000000</div>
<div class="a t " style="left:440.20px;top:458.03px;color:#5a5a5a">0,000000</div>
<div class="a t c " style="left:480.60px;width:100px;top:458.03px;color:#5a5a5a">INT32</div>
<div class="a t " style="left:563.60px;top:458.03px;color:#5a5a5a">4</div>
<div class="a " style="left:18.40px;top:470.18px;width:8.20px;height:8.20px;background:#fff;border:1px solid #d3d3d3"></div>
<svg width="980" height="520" viewBox="0 0 980 520"><path d="M20.4 474.28l1.6 1.8 2.8-3.6" fill="none" stroke="#111" stroke-width="1"/></svg>
<div class="a t c " style="left:41.50px;width:100px;top:470.28px;color:#fff;text-shadow:0 0 .3px #fff">Graph 108</div>
<div class="a " style="left:157.60px;top:473.38px;width:5.20px;height:1.70px;background:#b63fe6;border-radius:.4px"></div>
<div class="a t " style="left:175.60px;top:470.28px;color:#fff;text-shadow:0 0 .3px #fff">118,024758</div>
<div class="a t " style="left:247.20px;top:470.28px;color:#fff;text-shadow:0 0 .3px #fff">178,024758</div>
<div class="a t " style="left:318.20px;top:470.28px;color:#fff;text-shadow:0 0 .3px #fff">1,000000</div>
<div class="a t " style="left:379.60px;top:470.28px;color:#fff;text-shadow:0 0 .3px #fff">60,000000</div>
<div class="a t " style="left:440.20px;top:470.28px;color:#fff;text-shadow:0 0 .3px #fff">0,000000</div>
<div class="a t c " style="left:480.60px;width:100px;top:470.28px;color:#fff;text-shadow:0 0 .3px #fff">DOUBLE64</div>
<div class="a t " style="left:563.60px;top:470.28px;color:#fff;text-shadow:0 0 .3px #fff">5</div>
<div class="a " style="left:35.20px;top:468.20px;width:0.60px;height:12.10px;background:#e8eef6"></div>
<div class="a " style="left:147.20px;top:468.20px;width:0.60px;height:12.10px;background:#e8eef6"></div>
<div class="a " style="left:172.90px;top:468.20px;width:0.60px;height:12.10px;background:#e8eef6"></div>
<div class="a " style="left:244.90px;top:468.20px;width:0.60px;height:12.10px;background:#e8eef6"></div>
<div class="a " style="left:315.90px;top:468.20px;width:0.60px;height:12.10px;background:#e8eef6"></div>
<div class="a " style="left:377.30px;top:468.20px;width:0.60px;height:12.10px;background:#e8eef6"></div>
<div class="a " style="left:437.90px;top:468.20px;width:0.60px;height:12.10px;background:#e8eef6"></div>
<div class="a " style="left:499.70px;top:468.20px;width:0.60px;height:12.10px;background:#e8eef6"></div>
<div class="a " style="left:560.90px;top:468.20px;width:0.60px;height:12.10px;background:#e8eef6"></div>
<div class="a " style="left:18.40px;top:482.43px;width:8.20px;height:8.20px;background:#fff;border:1px solid #d3d3d3"></div>
<div class="a t c " style="left:41.50px;width:100px;top:482.53px;color:#5a5a5a">Graph 109</div>
<div class="a " style="left:157.60px;top:485.63px;width:5.20px;height:1.70px;background:#f2f060;border-radius:.4px"></div>
<div class="a t " style="left:318.20px;top:482.53px;color:#5a5a5a">1,000000</div>
<div class="a t " style="left:379.60px;top:482.53px;color:#5a5a5a">0,000000</div>
<div class="a t " style="left:440.20px;top:482.53px;color:#5a5a5a">0,000000</div>
<div class="a t c " style="left:480.60px;width:100px;top:482.53px;color:#5a5a5a">DOUBLE64</div>
<div class="a t " style="left:563.60px;top:482.53px;color:#5a5a5a">6</div>
<div class="a " style="left:578.00px;top:281.90px;width:188.20px;height:203.90px;background:#f3f3f3;border:1px solid #d5d5d5;box-shadow:0 1.5px 5px rgba(0,0,0,.28)"></div>
<div class="a " style="left:579.00px;top:283.00px;width:186.00px;height:15.00px;background:#fff"></div>
<div class="a t " style="left:593.40px;top:286.00px;color:#b4b4b4;font-size:6.2px">Velocity</div>
<div class="a " style="left:583.60px;top:304.00px;width:177.40px;height:176.80px;border:1px solid #e9e9e9"></div>
<div class="a t " style="left:587.00px;top:299.80px;background:#f3f3f3;padding:0 1px;color:#333;font-size:5.5px">Tachometer</div>
<div class="a btn" style="left:588.00px;top:308.80px;width:15.80px;height:13.60px;"></div>
<div class="a btn" style="left:612.10px;top:308.80px;width:15.50px;height:13.60px;"></div>
<div class="a btn" style="left:631.20px;top:308.80px;width:15.50px;height:13.60px;"></div>
<div class="a btn" style="left:649.80px;top:308.80px;width:15.70px;height:13.60px;"></div>
<svg width="980" height="520" viewBox="0 0 980 520"><defs><radialGradient id="kn" cx=".42" cy=".3" r=".75"><stop offset="0" stop-color="#dcdcdc"/><stop offset=".45" stop-color="#909090"/><stop offset="1" stop-color="#383838"/></radialGradient><radialGradient id="dial" cx=".5" cy=".5" r=".5"><stop offset="0" stop-color="#f4f4f4"/><stop offset=".7" stop-color="#fbfbfb"/><stop offset="1" stop-color="#ffffff"/></radialGradient></defs><path d="M584.2 292.6a3.3 3.3 0 1 1 4.6 0" fill="none" stroke="#8d97b0" stroke-width=".9"/><path d="M586.5 290.6l.9-1.8" stroke="#8d97b0" stroke-width=".7"/><circle cx="595.9" cy="315.6" r="3" fill="#eaf0f8" stroke="#3f6cab" stroke-width=".7"/><circle cx="595.9" cy="315.6" r="1.2" fill="none" stroke="#3f6cab" stroke-width=".6"/><rect x="617.7" y="313.4" width="4.5" height="4.5" fill="#1d4f8f"/><path d="M636.6 313.6l-.8 0v4h.8M641.4 313.6h.8v4h-.8M637.4 314.2l1.6 1.2 1.6-1.2M639 315.4v2.2" fill="none" stroke="#4e9a52" stroke-width=".6"/><path d="M655.30 316.00a2.5 2.5 0 1 0 1.38 -2.38" fill="none" stroke="#1d4f8f" stroke-width="1"/><path d="M653.80 315.10h3.2l-1.6 2.3z" fill="#1d4f8f"/><circle cx="671.4" cy="400.3" r="72.2" fill="url(#dial)" stroke="#660e7a" stroke-width="3"/><path d="M639.01 432.69A45.8 45.8 0 0 1 625.60 400.30" fill="none" stroke="#d81414" stroke-width="2.8"/><path d="M625.60 400.30A45.8 45.8 0 0 1 657.25 356.74" fill="none" stroke="#ffff22" stroke-width="2.8"/><path d="M657.25 356.74A45.8 45.8 0 0 1 685.55 356.74" fill="none" stroke="#0f6e14" stroke-width="2.8"/><path d="M685.55 356.74A45.8 45.8 0 0 1 717.20 400.30" fill="none" stroke="#ffff22" stroke-width="2.8"/><path d="M717.20 400.30A45.8 45.8 0 0 1 703.79 432.69" fill="none" stroke="#d81414" stroke-width="2.8"/><path d="M637.74 433.96L632.23 439.47M634.72 430.64L631.18 433.57M632.03 427.06L628.23 429.64M629.69 423.23L625.66 425.45M627.71 419.20L623.49 421.03M626.13 415.01L618.71 417.42M624.95 410.68L620.46 411.69M624.18 406.27L619.61 406.84M623.82 401.80L619.23 401.94M623.89 397.31L619.30 397.02M624.39 392.85L616.68 391.63M625.30 388.46L620.84 387.32M626.61 384.18L622.29 382.62M628.33 380.03L624.17 378.07M630.43 376.07L626.47 373.73M632.89 372.32L626.58 367.74M635.69 368.82L632.24 365.78M638.82 365.60L635.67 362.25M642.23 362.69L639.41 359.05M645.89 360.11L643.43 356.23M649.79 357.89L646.25 350.94M653.88 356.04L652.18 351.77M658.12 354.59L656.84 350.17M662.48 353.54L661.62 349.02M666.92 352.91L666.49 348.33M671.40 352.70L671.40 344.90M675.88 352.91L676.31 348.33M680.32 353.54L681.18 349.02M684.68 354.59L685.96 350.17M688.92 356.04L690.62 351.77M693.01 357.89L696.55 350.94M696.91 360.11L699.37 356.23M700.57 362.69L703.39 359.05M703.98 365.60L707.13 362.25M707.11 368.82L710.56 365.78M709.91 372.32L716.22 367.74M712.37 376.07L716.33 373.73M714.47 380.03L718.63 378.07M716.19 384.18L720.51 382.62M717.50 388.46L721.96 387.32M718.41 392.85L726.12 391.63M718.91 397.31L723.50 397.02M718.98 401.80L723.57 401.94M718.62 406.27L723.19 406.84M717.85 410.68L722.34 411.69M716.67 415.01L724.09 417.42M715.09 419.20L719.31 421.03M713.11 423.23L717.14 425.45M710.77 427.06L714.57 429.64M708.08 430.64L711.62 433.57M705.06 433.96L710.57 439.47" stroke="#3a3a3a" stroke-width=".8"/><text x="626.99" y="444.71" font-size="7.4" fill="#222" text-anchor="middle" dominant-baseline="central" transform="rotate(-135.00 626.99 444.71)">-150,0</text><text x="611.67" y="419.71" font-size="7.4" fill="#222" text-anchor="middle" dominant-baseline="central" transform="rotate(-108.00 611.67 419.71)">-120,0</text><text x="609.37" y="390.48" font-size="7.4" fill="#222" text-anchor="middle" dominant-baseline="central" transform="rotate(-81.00 609.37 390.48)">-90,0</text><text x="620.59" y="363.39" font-size="7.4" fill="#222" text-anchor="middle" dominant-baseline="central" transform="rotate(-54.00 620.59 363.39)">-60,0</text><text x="642.89" y="344.34" font-size="7.4" fill="#222" text-anchor="middle" dominant-baseline="central" transform="rotate(-27.00 642.89 344.34)">-30,0</text><text x="671.40" y="337.50" font-size="7.4" fill="#222" text-anchor="middle" dominant-baseline="central" transform="rotate(0.00 671.40 337.50)">0,0</text><text x="699.91" y="344.34" font-size="7.4" fill="#222" text-anchor="middle" dominant-baseline="central" transform="rotate(27.00 699.91 344.34)">30,0</text><text x="722.21" y="363.39" font-size="7.4" fill="#222" text-anchor="middle" dominant-baseline="central" transform="rotate(54.00 722.21 363.39)">60,0</text><text x="733.43" y="390.48" font-size="7.4" fill="#222" text-anchor="middle" dominant-baseline="central" transform="rotate(81.00 733.43 390.48)">90,0</text><text x="731.13" y="419.71" font-size="7.4" fill="#222" text-anchor="middle" dominant-baseline="central" transform="rotate(108.00 731.13 419.71)">120,0</text><text x="715.81" y="444.71" font-size="7.4" fill="#222" text-anchor="middle" dominant-baseline="central" transform="rotate(135.00 715.81 444.71)">150,0</text><path d="M621.09 421.67l2.5 4.3h-5z" fill="#660e7a"/><path d="M721.71 421.67l2.5 4.3h-5z" fill="#660e7a"/><path d="M670.65 398.34L629.61 414.20L626.08 417.58L630.96 417.75L672.15 402.26z" fill="#76148a" stroke="#5a0a6e" stroke-width=".6"/><circle cx="671.6999999999999" cy="400.90000000000003" r="10.8" fill="url(#kn)" stroke="#6a6a6a" stroke-width=".5"/></svg>
<div class="a " style="left:641.00px;top:448.00px;width:60.70px;height:12.20px;background:#e6e6e6;border:1px solid #dcdcdc"></div>
<div class="a t c " style="left:621.40px;width:100px;top:450.20px;color:#333;font-size:7.6px">-123,19</div>
<div class="a " style="left:720.40px;top:187.40px;width:236.20px;height:203.00px;background:#f4f4f4;border:1px solid #d5d5d5;box-shadow:0 1.5px 6px rgba(0,0,0,.3)"></div>
<div class="a " style="left:721.00px;top:188.00px;width:235.00px;height:15.30px;background:#fff"></div>
<div class="a t " style="left:736.60px;top:191.20px;color:#b0b0b0;font-size:6.2px">Voltage</div>
<div class="a " style="left:727.60px;top:209.20px;width:223.80px;height:175.40px;border:1px solid #e9e9e9"></div>
<div class="a t " style="left:729.80px;top:205.00px;background:#f4f4f4;padding:0 1px;color:#333;font-size:5.5px">Amperemeter</div>
<div class="a btn" style="left:731.20px;top:214.20px;width:14.40px;height:14.30px;"></div>
<div class="a btn" style="left:755.00px;top:214.20px;width:14.80px;height:14.30px;"></div>
<div class="a btn" style="left:774.00px;top:214.20px;width:14.80px;height:14.30px;"></div>
<div class="a btn" style="left:793.00px;top:214.20px;width:15.00px;height:14.30px;"></div>
<div class="a btn" style="left:930.40px;top:214.20px;width:15.00px;height:14.30px;"></div>
<div class="a " style="left:731.60px;top:231.20px;width:213.80px;height:148.80px;background:#000"></div>
<div class="a " style="left:740.40px;top:239.50px;width:197.40px;height:104.80px;background:#fcfcfc"></div>
<svg width="980" height="520" viewBox="0 0 980 520"><defs><clipPath id="mclip"><rect x="740.4" y="239.5" width="197.4" height="104.8"/></clipPath></defs><rect x="725.4" y="194.8" width="7.6" height="2.8" fill="#151515"/><path d="M726.4 193.4q3-1.4 5.8 0" fill="none" stroke="#c03030" stroke-width=".7"/><rect x="727" y="193.6" width="4.4" height="1" fill="#e8e8e8"/><path d="M945.6 193.2l4.4 4.4M950 193.2l-4.4 4.4" stroke="#a0a0a0" stroke-width=".6"/><circle cx="738.4" cy="221.3" r="3" fill="#eaf0f8" stroke="#3f6cab" stroke-width=".7"/><circle cx="738.4" cy="221.3" r="1.2" fill="none" stroke="#3f6cab" stroke-width=".6"/><rect x="760.2" y="219.1" width="4.5" height="4.5" fill="#1d4f8f"/><path d="M779 219.4l-.8 0v4h.8M783.8 219.4h.8v4h-.8M779.8 220l1.6 1.2 1.6-1.2M781.4 221.2v2.2" fill="none" stroke="#4e9a52" stroke-width=".6"/><path d="M798.10 221.70a2.5 2.5 0 1 0 1.38 -2.38" fill="none" stroke="#1d4f8f" stroke-width="1"/><path d="M796.60 220.80h3.2l-1.6 2.3z" fill="#1d4f8f"/><circle cx="937.9" cy="221.3" r="3" fill="#e8e8ee" stroke="#555" stroke-width=".7"/><path d="M937.9 218.3v6M934.9 221.3h6" stroke="#555" stroke-width=".5"/><g clip-path="url(#mclip)"><path d="M773.24 305.16A102.0 102.0 0 0 1 793.02 292.15" fill="none" stroke="#e01010" stroke-width="4"/><path d="M793.02 292.15A102.0 102.0 0 0 1 829.32 281.74" fill="none" stroke="#ffff22" stroke-width="4"/><path d="M829.32 281.74A102.0 102.0 0 0 1 848.28 281.74" fill="none" stroke="#1a7a1a" stroke-width="4"/><path d="M848.28 281.74A102.0 102.0 0 0 1 884.58 292.15" fill="none" stroke="#ffff22" stroke-width="4"/><path d="M884.58 292.15A102.0 102.0 0 0 1 904.36 305.16" fill="none" stroke="#e01010" stroke-width="4"/><path d="M771.56 303.17L765.14 295.51M777.32 298.68L774.03 294.15M783.37 294.59L780.40 289.85M789.69 290.94L787.06 286.00M796.26 287.74L793.98 282.63M803.02 285.01L799.60 275.61M809.97 282.75L808.42 277.37M817.05 280.99L815.89 275.51M824.24 279.72L823.46 274.17M831.50 278.95L831.11 273.37M838.80 278.70L838.80 268.70M846.10 278.95L846.49 273.37M853.36 279.72L854.14 274.17M860.55 280.99L861.71 275.51M867.63 282.75L869.18 277.37M874.58 285.01L878.00 275.61M881.34 287.74L883.62 282.63M887.91 290.94L890.54 286.00M894.23 294.59L897.20 289.85M900.28 298.68L903.57 294.15M906.04 303.17L912.46 295.51" stroke="#2a2a2a" stroke-width=".9"/><text x="758.77" y="287.93" font-size="10.6" fill="#222" text-anchor="middle" dominant-baseline="central" transform="rotate(-40.00 758.77 287.93)">-150,0</text><text x="796.22" y="266.31" font-size="10.6" fill="#222" text-anchor="middle" dominant-baseline="central" transform="rotate(-20.00 796.22 266.31)">-75,0</text><text x="838.80" y="258.80" font-size="10.6" fill="#222" text-anchor="middle" dominant-baseline="central" transform="rotate(0.00 838.80 258.80)">0,0</text><text x="881.38" y="266.31" font-size="10.6" fill="#222" text-anchor="middle" dominant-baseline="central" transform="rotate(20.00 881.38 266.31)">75,0</text><text x="918.83" y="287.93" font-size="10.6" fill="#222" text-anchor="middle" dominant-baseline="central" transform="rotate(40.00 918.83 287.93)">150,0</text><path d="M771.44 286.50h7l-3.5 5.4z" fill="#660e7a"/><path d="M899.16 286.50h7l-3.5 5.4z" fill="#660e7a"/><path d="M840.40 384.10L779.39 287.21" stroke="rgba(90,20,120,.18)" stroke-width="2.6"/><path d="M838.80 383.30L777.79 286.41" stroke="#5e0c74" stroke-width="2"/></g></svg>
<div class="a " style="left:796.20px;top:354.60px;width:85.80px;height:15.60px;background:#e8e8e8;border:1px solid #dcdcdc"></div>
<div class="a t c " style="left:789.20px;width:100px;top:358.60px;color:#222;font-size:10.4px;height:12px;line-height:12px;top:356.6px">-123,19</div>
</div></body></html>
